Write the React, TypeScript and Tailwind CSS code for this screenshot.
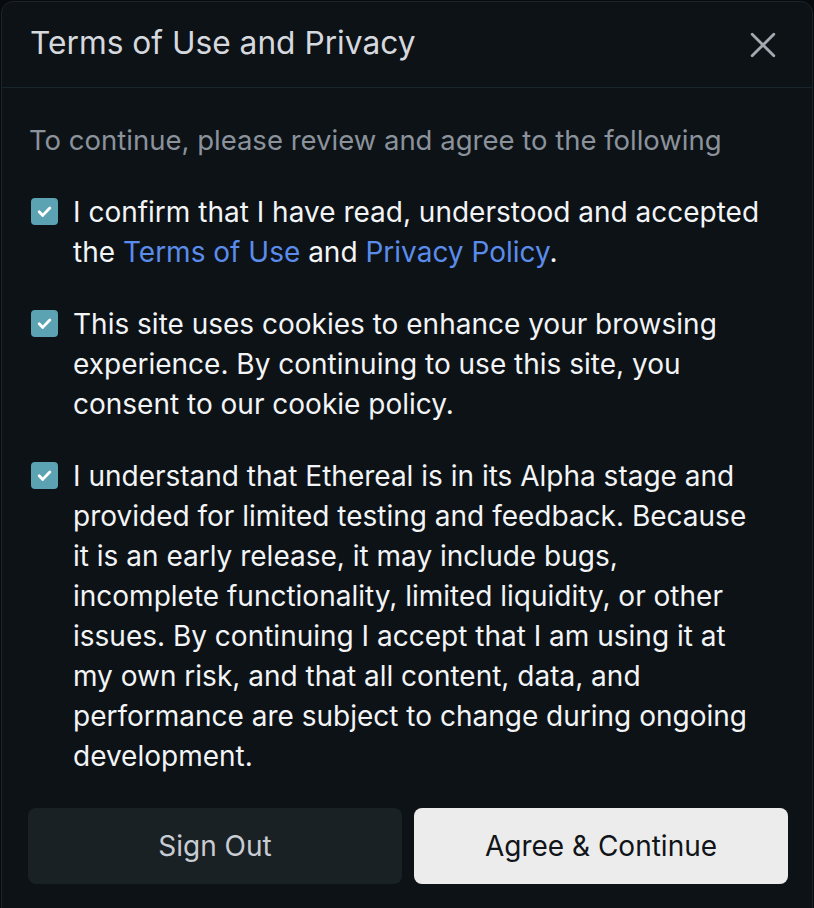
import React, { useState } from 'react';

function Check({ checked, onChange }: { checked: boolean; onChange: () => void }) {
  return (
    <button
      onClick={onChange}
      className={`mt-[6px] w-[27px] h-[27px] shrink-0 rounded-[4px] flex items-center justify-center ${
        checked ? 'bg-[#5ba3b3]' : 'border-2 border-[#5ba3b3]'
      }`}
    >
      {checked && (
        <svg width="17" height="17" viewBox="0 0 24 24" fill="none" stroke="white" strokeWidth="4" strokeLinecap="round" strokeLinejoin="round">
          <path d="M4.5 12.5l5 5L19.5 7" />
        </svg>
      )}
    </button>
  );
}

export default function App() {
  const [agree, setAgree] = useState({ terms: true, cookies: true, alpha: true });
  const toggle = (key: keyof typeof agree) => setAgree({ ...agree, [key]: !agree[key] });

  return (
    <div className="min-h-screen bg-[#080b0e] px-px pt-px overflow-hidden" style={{ fontFamily: 'Inter, "Noto Sans", sans-serif' }}>
      <div className="min-h-[920px] bg-[#0c1216] border border-[#1b242a] rounded-t-[12px]">
        {/* Header */}
        <header className="h-[86px] pl-[28px] pr-[36px] pb-[4px] flex items-center justify-between border-b border-[#18242b]">
          <h1 className="text-[31.7px] leading-none text-[#d5d8de]">Terms of Use and Privacy</h1>
          <button className="text-[#a3a9b1] mt-[4px]">
            <svg width="26" height="26" viewBox="0 0 24 24" fill="none" stroke="currentColor" strokeWidth="2.6" strokeLinecap="round">
              <path d="M2 2l20 20M22 2L2 22" />
            </svg>
          </button>
        </header>

        <main className="pl-[26px] pr-[24px] pt-[32px]">
          <p className="pl-px text-[27.5px] leading-[40px] text-[#8b929c]">To continue, please review and agree to the following</p>

          <div className="mt-[32px] flex flex-col gap-[32px] pr-[25px]">
            <div className="flex gap-[15px] pl-[3px]">
              <Check checked={agree.terms} onChange={() => toggle('terms')} />
              <p className="text-[28px] leading-[40px] text-[#f3f4f6]">
                I confirm that I have read, understood and accepted the{' '}
                <a className="text-[#5b8cec]">Terms of Use</a> and{' '}
                <a className="text-[#5b8cec]">Privacy Policy</a>.
              </p>
            </div>
            <div className="flex gap-[15px] pl-[3px]">
              <Check checked={agree.cookies} onChange={() => toggle('cookies')} />
              <p className="text-[28px] leading-[40px] text-[#f3f4f6]">
                This site uses cookies to enhance your browsing experience. By continuing to use this site, you consent to our cookie policy.
              </p>
            </div>
            <div className="flex gap-[15px] pl-[3px]">
              <Check checked={agree.alpha} onChange={() => toggle('alpha')} />
              <p className="text-[28px] leading-[40px] text-[#f3f4f6]">
                I understand that Ethereal is in its Alpha stage and provided for limited testing and feedback. Because it is an early release, it may include bugs, incomplete functionality, limited liquidity, or other issues. By continuing I accept that I am using it at my own risk, and that all content, data, and performance are subject to change during ongoing development.
              </p>
            </div>
          </div>

          <div className="mt-[32px] flex gap-[12px]">
            <button className="flex-1 h-[76px] rounded-[8px] bg-[#1a2125] text-[28px] text-[#c9cdd3]">Sign Out</button>
            <button className="flex-1 h-[76px] rounded-[8px] bg-[#ececec] text-[28px] text-[#111418]">Agree &amp; Continue</button>
          </div>
        </main>
      </div>
    </div>
  );
}
